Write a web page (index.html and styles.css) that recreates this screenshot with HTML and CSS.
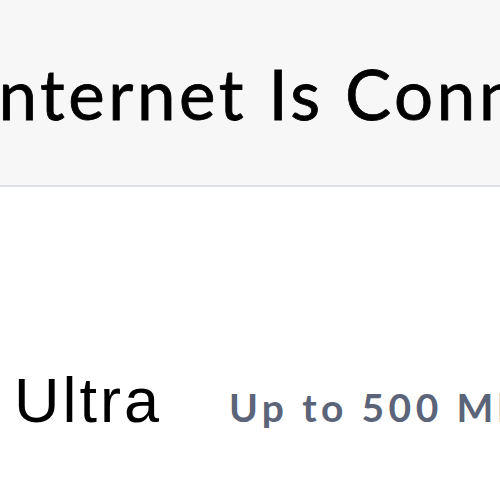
FILE: index.html
```html
<!DOCTYPE html>
<html>
<head>
<meta charset="utf-8">
<link rel="stylesheet" href="styles.css">
</head>
<body>
<header class="top">
  <h1 class="title">Internet Is Connected</h1>
</header>
<main class="content">
  <div class="plan">
    <span class="plan-name">Ultra</span>
    <span class="plan-speed">Up to 500 Mbps</span>
  </div>
</main>
</body>
</html>
```
FILE: styles.css
```css
html, body {
  margin: 0;
  padding: 0;
  background: #ffffff;
  overflow: hidden;
  width: 500px;
  height: 500px;
}
.top {
  height: 185px;
  background: #f7f7f7;
  border-bottom: 2px solid #dde0e6;
  display: flex;
  align-items: flex-start;
  overflow: hidden;
}
.title {
  margin: 52px 0 0 -24px;
  font-family: Lato, "Liberation Sans", sans-serif;
  font-weight: 400;
  font-size: 69px;
  line-height: 84px;
  letter-spacing: 3.6px;
  -webkit-text-stroke: 0.8px #000000;
  color: #000000;
  white-space: nowrap;
}
.content {
  padding: 0 0 0 14px;
}
.plan {
  display: flex;
  align-items: baseline;
  gap: 67px;
  margin-top: 178px;
  white-space: nowrap;
}
.plan-name {
  font-family: "Liberation Sans", Arial, sans-serif;
  font-size: 63px;
  line-height: 70px;
  letter-spacing: 3px;
  color: #000000;
}
.plan-speed {
  font-family: Lato, "Liberation Sans", sans-serif;
  font-weight: 700;
  font-size: 39px;
  letter-spacing: 4.4px;
  color: #5b6478;
}
```
